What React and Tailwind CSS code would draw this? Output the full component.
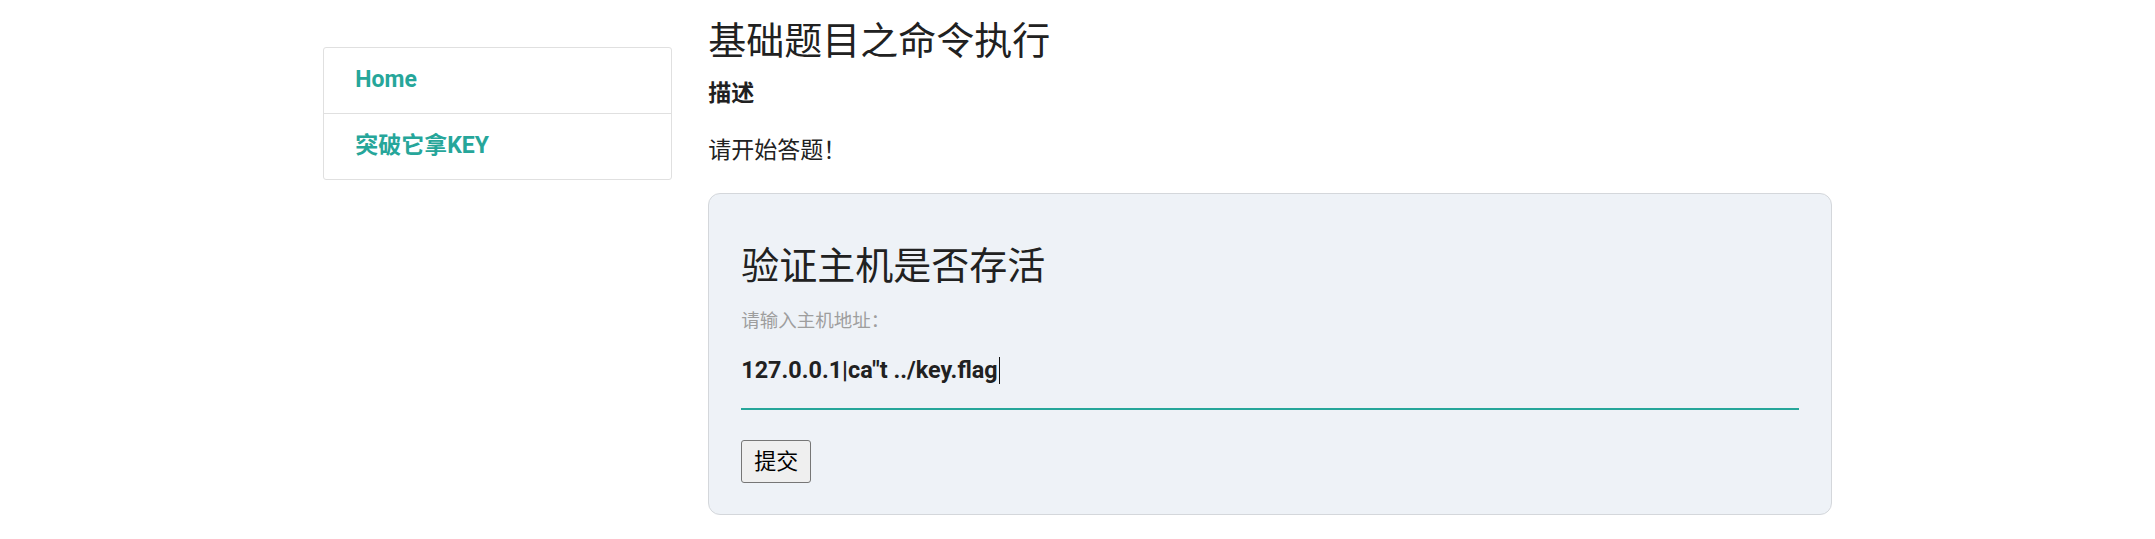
export default function App() {
  const font = { fontFamily: "Roboto, 'Noto Sans CJK SC', sans-serif" };
  return (
    <div className="min-h-[539px] w-full bg-white text-[#212121]" style={font}>
      <div className="mx-auto flex w-[70%] items-start">
        {/* Sidebar */}
        <div className="mt-[47px] w-[349px] shrink-0 rounded-[3px] border border-[#e0e0e0] bg-white">
          <div className="flex h-[65px] items-center pl-[31px] text-[23px] font-bold text-[#26a69a]">
            Home
          </div>
          <div className="flex h-[66px] items-center border-t border-[#e0e0e0] pl-[31px] text-[23px] font-bold text-[#26a69a]">
            突破它拿KEY
          </div>
        </div>

        {/* Main */}
        <div className="ml-[36px] flex-1">
          <h1 className="mt-[19px] text-[38px] leading-[44px] font-normal text-[#212121]">
            基础题目之命令执行
          </h1>
          <h2 className="mt-[16px] text-[23px] leading-[30px] font-bold text-[#212121]">
            描述
          </h2>
          <p className="mt-[27px] text-[23px] leading-[30px] text-[#212121]">
            请开始答题！
          </p>

          <div className="mt-[27px] rounded-[12px] border border-[#d4d7db] bg-[#eef2f7] px-[32px] pt-[50px] pb-[31px]">
            <h3 className="text-[38px] leading-[44px] font-normal text-[#212121]">
              验证主机是否存活
            </h3>
            <label className="mt-[21px] block text-[18.5px] leading-[24px] text-[#9e9e9e]">
              请输入主机地址：
            </label>
            <div className="mt-[22px] border-b-2 border-[#26a69a] pb-[23px]">
              <div className="flex items-center text-[23.4px] leading-[30px] font-bold text-[#212121]">
                <span>127.0.0.1|ca"t ../key.flag</span>
                <span className="ml-[1px] inline-block h-[27px] w-[1.5px] bg-[#111]"></span>
              </div>
            </div>
            <button className="mt-[30px] flex h-[43px] w-[70px] items-center justify-center rounded-[3px] border border-[#767676] bg-[#efefef] text-[22px] leading-none text-black">
              提交
            </button>
          </div>
        </div>
      </div>
    </div>
  );
}
